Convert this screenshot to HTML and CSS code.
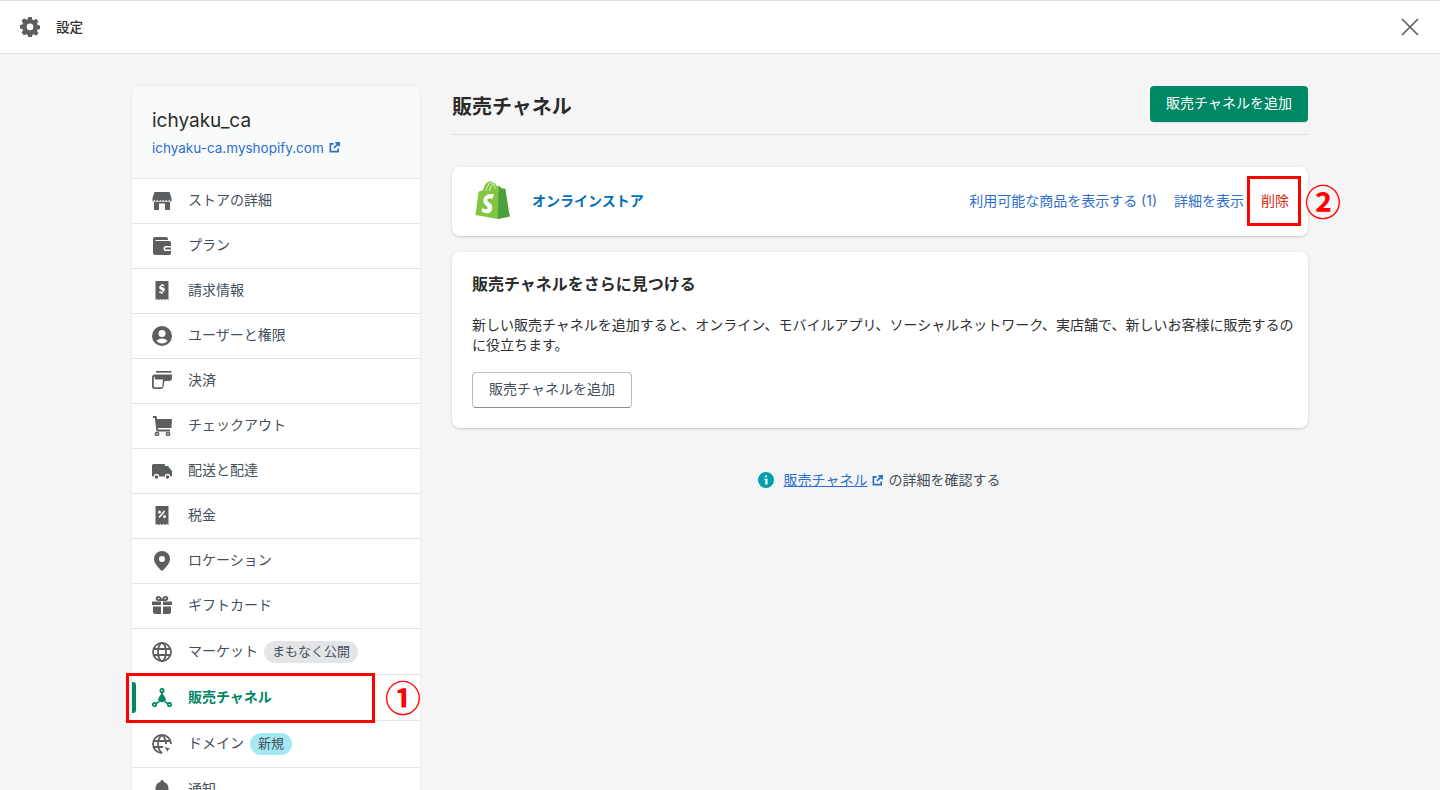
FILE: index.html
```html
<!DOCTYPE html>
<html lang="ja">
<head>
    <meta charset="UTF-8">
    <title>設定</title>
    <link rel="stylesheet" href="styles.css">
</head>
<body>
    <header class="topbar">
        <div class="topbar-title">
            <svg class="gear" viewBox="0 0 20 20"><path fill-rule="evenodd" d="M8.200 0h3.600l.5 2.700 1.500.6L16 1.800l2.500 2.500-1.500 2.200.6 1.500 2.400.5v3.600l-2.400.5-.6 1.500 1.500 2.200-2.500 2.500-2.200-1.500-1.500.6-.5 2.400H8.200l-.5-2.400-1.500-.6L4 18.300l-2.500-2.500L3 13.600l-.6-1.500L0 11.600V8l2.400-.5.6-1.500-1.500-2.200L4 1.300l2.200 1.500 1.500-.6zM10 6.600a3.300 3.300 0 1 0 0 6.600 3.300 3.300 0 0 0 0-6.600z"/></svg>
            <span>設定</span>
        </div>
        <svg class="close" viewBox="0 0 20 20"><path d="M2 2l16 16M18 2L2 18"/></svg>
    </header>

    <div class="page">
        <aside class="sidebar">
            <div class="store">
                <div class="store-name">ichyaku_ca</div>
                <a class="store-link">ichyaku-ca.myshopify.com
                    <svg class="ext" viewBox="0 0 12 12"><path d="M5 2H1.500v8.500h8.500V7M7 1h4v4M11 1L5.500 6.500"/></svg>
                </a>
            </div>
            <ul class="nav">
                <li><svg viewBox="0 0 20 20"><path d="M2.500 1h15l2 6v3.500H.5V7z"/><path d="M2 11h16v8h-5v-6.500H7V19H2z"/><path d="M1.500 9.800h17" stroke="#fff" stroke-width="1.200" stroke-dasharray="1.500 1.500"/></svg>ストアの詳細</li>
                <li><svg viewBox="0 0 20 20"><path fill-rule="evenodd" d="M3 1h11a2 2 0 0 1 2 2v1H3.500v1H17a2 2 0 0 1 2 2v3h-5a2.500 2.500 0 0 0 0 5h5v2a2 2 0 0 1-2 2H3a2 2 0 0 1-2-2V3a2 2 0 0 1 2-2zM14 11.500h5v2h-5a1 1 0 0 1 0-2z"/></svg>プラン</li>
                <li><svg viewBox="0 0 20 20"><path fill-rule="evenodd" d="M3.500 0h13v19l-1.600-1-1.600 1-1.700-1-1.600 1-1.600-1-1.700 1-1.600-1-1.600 1zM9.300 3v1.200C8 4.500 7.200 5.400 7.200 6.600c0 1.400 1 2 2.200 2.400 1 .3 1.400.5 1.400 1 0 .4-.4.700-1 .7-.7 0-1.400-.3-2-.8l-.8 1.300c.6.600 1.400.9 2.300 1V13h1.400v-1.800c1.300-.3 2.100-1.200 2.100-2.400 0-1.500-1-2.100-2.300-2.500-1-.3-1.300-.5-1.300-.9 0-.3.300-.6.900-.6.500 0 1.100.2 1.700.6l.7-1.300c-.5-.4-1.100-.6-1.800-.7V3z"/></svg>請求情報</li>
                <li><svg viewBox="0 0 20 20"><path fill-rule="evenodd" d="M10 0a10 10 0 1 1 0 20 10 10 0 0 1 0-20zm0 4a3.500 3.500 0 1 0 0 7 3.500 3.500 0 0 0 0-7zm0 8.500c-2.500 0-4.500 1-5.500 2.500 1.300 1.600 3.300 2.500 5.500 2.500s4.200-.9 5.500-2.500c-1-1.500-3-2.500-5.500-2.500z"/></svg>ユーザーと権限</li>
                <li><svg viewBox="0 0 20 20"><path d="M4 0h15.500v1.700H4z"/><path fill-rule="evenodd" d="M3 3.500h17v3.500c0 1.700-1.300 3-3 3h-4.500l-.9 5.500c-.2 1.500-1.300 2.500-2.800 2.500H2.500A2.500 2.500 0 0 1 0 15.500V6.500a3 3 0 0 1 3-3zm-.2 2.200c-.6 0-1 .4-1 1v8.500c0 .6.400 1 1 1h6.500c.6 0 1-.4 1.100-1L11 8.500H2.800z"/></svg>決済</li>
                <li><svg viewBox="0 0 20 20"><path d="M1 0h3.500l.5 3h15l-.5 9H6l.2 1.500H18v2H4.500L2.800 2H1z"/><circle cx="5" cy="18" r="1.600" fill="none" stroke="#5c5f62" stroke-width="1.500"/><circle cx="16" cy="18" r="1.600" fill="none" stroke="#5c5f62" stroke-width="1.500"/></svg>チェックアウト</li>
                <li><svg viewBox="0 0 20 20"><path d="M1.500 3H12a1 1 0 0 1 1 1v1h3l4 5v4.500a1 1 0 0 1-1 1h-.8a2.700 2.700 0 0 0-5.400 0H7.200a2.700 2.700 0 0 0-5.400 0H1a1 1 0 0 1-1-1V4.500A1.500 1.500 0 0 1 1.500 3z"/><circle cx="4.500" cy="16" r="1.800"/><circle cx="15.500" cy="16" r="1.800"/></svg>配送と配達</li>
                <li><svg viewBox="0 0 20 20"><path fill-rule="evenodd" d="M3.500 0h13v19l-1.600-1-1.600 1-1.700-1-1.600 1-1.600-1-1.700 1-1.600-1-1.600 1zM12 4.500L6.500 11l1.200 1L13.200 5.500zM7.500 4.500a1.500 1.500 0 1 0 0 3 1.500 1.500 0 0 0 0-3zm5 4.500a1.500 1.500 0 1 0 0 3 1.500 1.500 0 0 0 0-3z"/></svg>税金</li>
                <li><svg viewBox="0 0 20 20"><path fill-rule="evenodd" d="M10 0a8 8 0 0 1 8 8c0 4.500-5 9.500-8 12-3-2.500-8-7.500-8-12a8 8 0 0 1 8-8zm0 5a3 3 0 1 0 0 6 3 3 0 0 0 0-6z"/></svg>ロケーション</li>
                <li><svg viewBox="0 0 20 20"><path fill-rule="evenodd" d="M0 5.500h9V9H0zM11 5.500h9V9h-9zM1 10.500h8V18H3a2 2 0 0 1-2-2zM11 10.500h8V16a2 2 0 0 1-2 2h-6zM6.500 0C8.300 0 9.500 1.500 10 3c.5-1.500 1.700-3 3.500-3a2.500 2.500 0 0 1 .5 5H6a2.500 2.500 0 0 1 .5-5zm0 1.800a.8.8 0 0 0 0 1.500h1.300c-.3-.8-.7-1.500-1.300-1.500zm7 0c-.6 0-1 .7-1.300 1.500h1.300a.8.8 0 0 0 0-1.500z"/></svg>ギフトカード</li>
                <li><svg viewBox="0 0 20 20" class="line"><circle cx="10" cy="10" r="9"/><ellipse cx="10" cy="10" rx="4" ry="9"/><path d="M1.500 7h17M1.500 13h17"/></svg>マーケット<span class="badge">まもなく公開</span></li>
                <li class="active"><svg viewBox="0 0 20 20"><path d="M10 6.500c.8 0 1.200.5 1.600 1.200l1.600 3c.5 1 .2 1.600-.5 2-.8.500-1.700 1-2.700 1s-1.900-.5-2.700-1c-.7-.4-1-1-.5-2l1.600-3c.4-.7.8-1.200 1.600-1.200z"/><g fill="none" stroke-width="1.700"><circle cx="10" cy="2.500" r="1.700"/><circle cx="2.500" cy="16.500" r="1.700"/><circle cx="17.500" cy="16.500" r="1.700"/><path d="M4 15.600l3.500-2.200M16 15.600l-3.500-2.200M10 4v3"/></g></svg>販売チャネル</li>
                <li><svg viewBox="0 0 20 20" class="line"><path d="M10 19a9 9 0 1 1 9-9"/><path d="M10 1c-2.500 2-4 5-4 9s1.500 7 4 9M10 1c2.500 2 4 5 4 9M1.500 7h17M1.500 13H11"/><path class="fill" d="M12 12l7.500 2.800-3 1.200-1.300 3z"/></svg>ドメイン<span class="badge new">新規</span></li>
                <li><svg viewBox="0 0 20 20"><path d="M10 0a1.500 1.500 0 0 1 1.500 2C15 2.700 16.500 5.500 16.500 9v4l2 3h-17l2-3V9c0-3.500 1.500-6.300 5-7A1.500 1.500 0 0 1 10 0z"/></svg>通知</li>
            </ul>
        </aside>

        <main class="content">
            <div class="content-head">
                <h1>販売チャネル</h1>
                <button class="btn-primary">販売チャネルを追加</button>
            </div>

            <section class="card channel">
                <svg class="bag" viewBox="0 0 36 41">
                    <path fill="#83c441" d="M31 7.800c0-.2-.2-.3-.4-.3l-3.300-.2-2.400-2.400c-.2-.2-.7-.2-.9-.1l-1.200.4C22 3.200 20.900 1.400 19 1.400h-.2C18.200.6 17.500.3 16.900.3c-4.700 0-6.900 5.800-7.600 8.800l-3.300 1c-1 .3-1.100.4-1.200 1.300C4.700 12.100 2 33.100 2 33.100l21.600 4L35.300 34.600S31 8 31 7.800z"/>
                    <path fill="#4c9f3d" d="M30.600 7.500l-3.300-.2-2.400-2.400c-.1-.1-.2-.1-.3-.1l-1 32.400 11.700-2.600S31 8 31 7.800c0-.2-.2-.3-.4-.3z"/>
                    <path fill="#fff" d="M19.700 13.600l-1.400 4.100s-1.200-.7-2.700-.7c-2.200 0-2.300 1.400-2.300 1.700 0 1.900 5 2.600 5 7.100 0 3.500-2.200 5.800-5.200 5.800-3.600 0-5.400-2.200-5.400-2.200l1-3.200s1.900 1.600 3.500 1.600c1 0 1.500-.8 1.500-1.400 0-2.500-4.100-2.600-4.100-6.800 0-3.500 2.500-6.800 7.600-6.800 2 0 2.900.6 2.900.6z"/>
                    <path fill="none" stroke="#d6ecb4" stroke-width="1" d="M12 10c.5-3 2.500-8 5.500-8.500 2 0 3.500 3 3.500 6M15.500 9.500c.5-2.500 2-5.500 4-6"/>
                </svg>
                <a class="channel-name">オンラインストア</a>
                <div class="channel-actions">
                    <a class="link">利用可能な商品を表示する (1)</a>
                    <a class="link">詳細を表示</a>
                    <a class="link danger">削除</a>
                </div>
            </section>

            <section class="card discover">
                <h2>販売チャネルをさらに見つける</h2>
                <p>新しい販売チャネルを追加すると、オンライン、モバイルアプリ、ソーシャルネットワーク、実店舗で、新しいお客様に販売するのに役立ちます。</p>
                <button class="btn-default">販売チャネルを追加</button>
            </section>

            <div class="footer-help">
                <svg class="info" viewBox="0 0 20 20"><path fill-rule="evenodd" d="M10 0a10 10 0 1 1 0 20 10 10 0 0 1 0-20zM10 4a1.400 1.400 0 1 0 0 2.800A1.400 1.400 0 0 0 10 4zM8 8.500V10h1v5.500h3V8.500z"/></svg>
                <a class="help-link">販売チャネル</a>
                <svg class="ext" viewBox="0 0 12 12"><path d="M5 2H1.500v8.500h8.500V7M7 1h4v4M11 1L5.500 6.500"/></svg>
                <span>の詳細を確認する</span>
            </div>
        </main>
    </div>

    <div class="mark mark-nav"></div>
    <div class="mark mark-delete"></div>
    <span class="num num-1">①</span>
    <span class="num num-2">②</span>
</body>
</html>
```

FILE: styles.css
```css
html, body {
    height: 100%;
}

body {
    margin: 0;
    height: 790px;
    overflow: hidden;
    position: relative;
    background-color: #f5f5f5;
    color: #303030;
    font-family: Inter, "Noto Sans CJK JP", sans-serif;
    font-size: 14px;
    line-height: 20px;
}

a {
    text-decoration: none;
}

/* top bar */
.topbar {
    height: 52px;
    display: flex;
    align-items: center;
    justify-content: space-between;
    padding: 0 20px;
    background-color: #fff;
    border-top: 1px solid #dfdfdf;
    border-bottom: 1px solid #dfdfdf;
}

.topbar-title {
    display: flex;
    align-items: center;
    gap: 16px;
    font-size: 13.500px;
    font-weight: 500;
}

.topbar-title span {
    margin-top: -1px;
}

.gear {
    width: 20px;
    height: 20px;
    fill: #5c5f62;
}

.close {
    width: 20px;
    height: 20px;
    fill: none;
    stroke: #5c5f62;
    stroke-width: 1.700;
}

.page {
    display: flex;
    gap: 32px;
    padding: 32px 132px 0;
}

/* sidebar */
.sidebar {
    width: 288px;
    flex-shrink: 0;
    background-color: #fff;
    border-radius: 8px 8px 0 0;
    box-shadow: 0 0 2px rgba(0,0,0,0.12);
}

.store {
    height: 92px;
    box-sizing: border-box;
    padding: 23px 20px 0;
    background-color: #f9fafa;
    border-radius: 8px 8px 0 0;
}

.store-name {
    font-size: 19px;
    line-height: 24px;
    color: #2b2b2b;
}

.store-link {
    display: block;
    margin-top: 5px;
    color: #2c6ecb;
    font-size: 13.500px;
}

.ext {
    width: 11px;
    height: 11px;
    fill: none;
    stroke: #2c6ecb;
    stroke-width: 1.800;
    margin-left: 1px;
}

.nav {
    list-style: none;
    margin: 0;
    padding: 0;
}

.nav li {
    height: 42px;
    padding: 0 0 2px 20px;
    display: flex;
    align-items: center;
    border-top: 1px solid #e1e3e5;
    color: #454f5b;
    font-size: 14px;
    position: relative;
}

.nav li:nth-child(11),
.nav li:nth-child(12) {
    height: 43px;
}

.nav li:nth-child(13) {
    height: 44px;
}

.nav li svg {
    width: 20px;
    height: 20px;
    fill: #5c5f62;
    stroke: none;
    margin: 2px 16px 0 0;
    flex-shrink: 0;
}

.nav li svg.line {
    fill: none;
    stroke: #5c5f62;
    stroke-width: 1.800;
}

.nav li svg.line .fill {
    fill: #5c5f62;
    stroke: #fff;
    stroke-width: 1;
}

.nav li.active {
    color: #008763;
    font-weight: 700;
}

.nav li.active svg {
    fill: #008763;
    stroke: #008763;
}

.nav li.active::before {
    content: "";
    position: absolute;
    left: 0;
    top: 7px;
    bottom: 7px;
    width: 4px;
    background-color: #008763;
    border-radius: 0 3px 3px 0;
}

.badge {
    margin: 2px 0 0 6px;
    padding: 0 8px;
    height: 22px;
    line-height: 21px;
    border-radius: 11px;
    background-color: #e4e5e7;
    color: #454f5b;
    font-size: 13px;
}

.badge.new {
    background-color: #a4e8f2;
}

/* main column */
.content {
    flex: 1;
}

.content-head {
    height: 48px;
    display: flex;
    align-items: flex-start;
    justify-content: space-between;
    border-bottom: 1px solid #dfe1e3;
}

h1 {
    margin: 7px 0 0;
    font-size: 20px;
    line-height: 28px;
    font-weight: 700;
    color: #2b2b2b;
}

.btn-primary {
    width: 158px;
    height: 36px;
    padding: 0 0 2px;
    border: none;
    border-radius: 4px;
    background-color: #008763;
    box-shadow: 0 1px 0 rgba(0,0,0,0.08);
    color: #fff;
    font: inherit;
    font-size: 14px;
}

.card {
    background-color: #fff;
    border-radius: 8px;
    box-shadow: 0 0 5px rgba(23,24,24,0.05), 0 1px 2px rgba(0,0,0,0.15);
}

.channel {
    height: 69px;
    margin-top: 32px;
    display: flex;
    align-items: center;
    padding-left: 20px;
}

.bag {
    width: 40px;
    height: 42px;
    flex-shrink: 0;
}

.channel-name {
    margin: -2px 0 0 20px;
    color: #006fbb;
    font-weight: 700;
}

.channel-actions {
    margin: -2px 0 0 auto;
    display: flex;
    align-items: center;
    gap: 17px;
    padding-right: 19px;
}

.link {
    color: #2c6ecb;
}

.danger {
    color: #d72c0d;
}

.discover {
    height: 176px;
    box-sizing: border-box;
    margin-top: 16px;
    padding: 20px;
}

h2 {
    margin: 0;
    font-size: 16px;
    line-height: 24px;
    font-weight: 700;
    color: #2b2b2b;
}

.discover p {
    margin: 19px -6px 0 0;
    color: #303030;
}

.btn-default {
    margin-top: 17px;
    width: 160px;
    height: 36px;
    padding: 0 0 2px;
    background-color: #fff;
    border: 1px solid #babfc3;
    border-bottom-color: #8c9196;
    border-radius: 4px;
    color: #454f5b;
    font: inherit;
    font-size: 14px;
}

.footer-help {
    margin-top: 42px;
    display: flex;
    align-items: center;
    justify-content: center;
    margin-left: -2px;
    color: #454f5b;
}

.info {
    width: 16px;
    height: 16px;
    fill: #00a0ac;
    margin-right: 10px;
}

.help-link {
    color: #2c6ecb;
    text-decoration: underline;
}

.footer-help .ext {
    margin: 0 5px;
}

/* annotations drawn over the screenshot */
.mark {
    position: absolute;
    box-sizing: border-box;
    border: 3px solid #f00;
}

.mark-nav {
    left: 126px;
    top: 673px;
    width: 249px;
    height: 50px;
}

.mark-delete {
    left: 1247px;
    top: 176px;
    width: 54px;
    height: 50px;
}

.num {
    position: absolute;
    color: #f00;
    font-family: "Noto Sans CJK JP", sans-serif;
    font-weight: 700;
    font-size: 36px;
    line-height: 40px;
}

.num-1 {
    left: 385px;
    top: 676px;
}

.num-2 {
    left: 1305px;
    top: 180px;
}
```
